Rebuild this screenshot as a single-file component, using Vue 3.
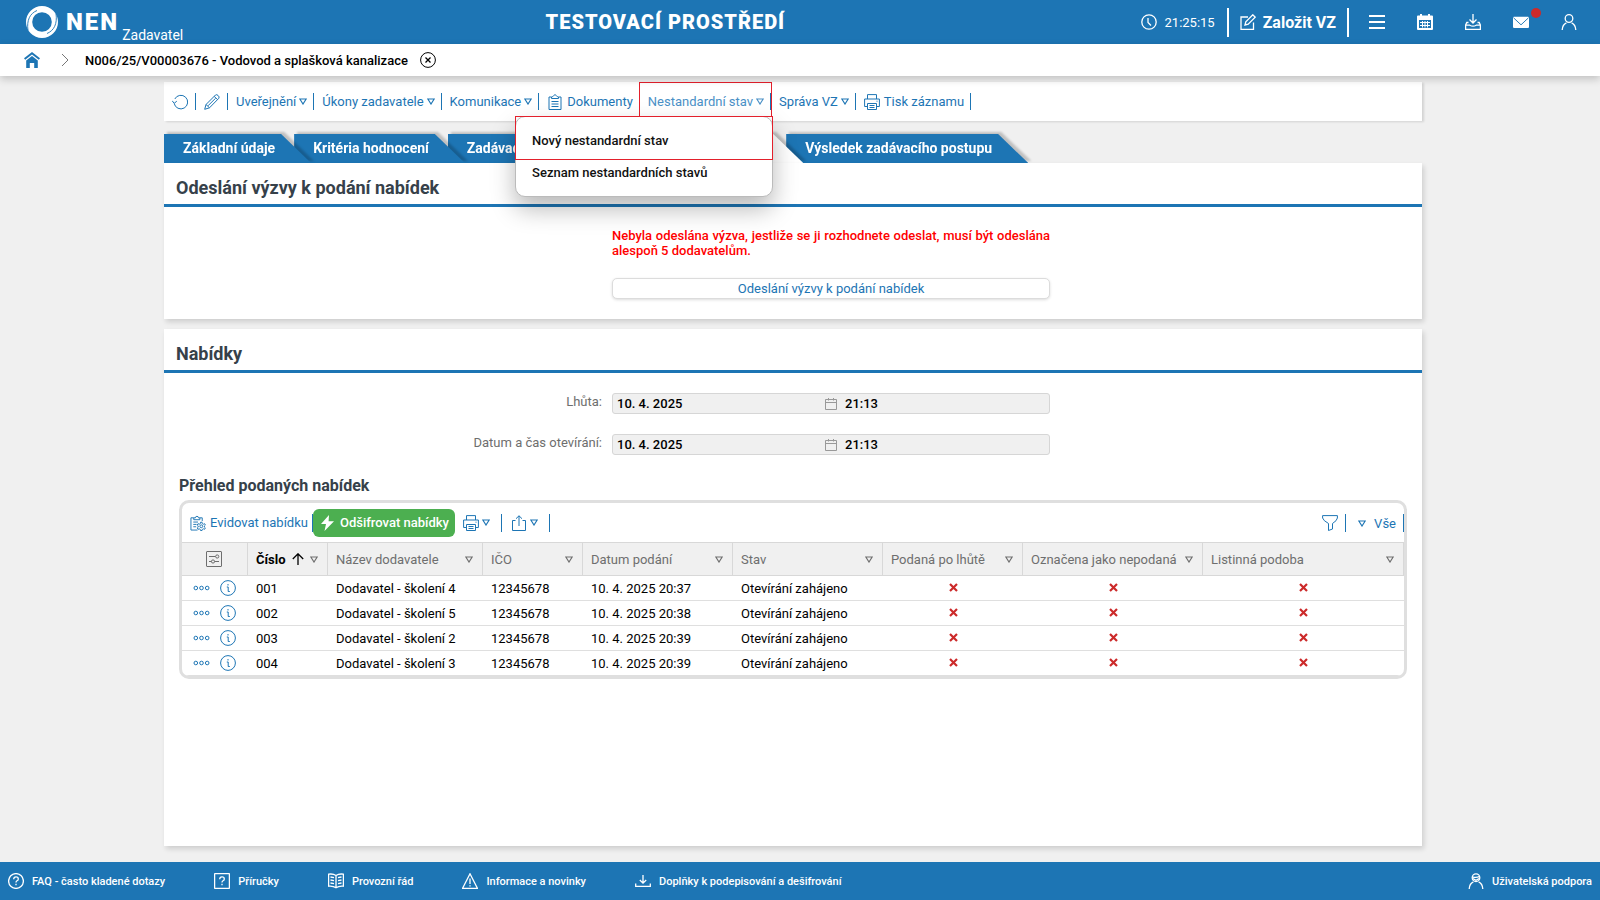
<script setup>
import { ref } from 'vue'

const headerActions = [
  { icon: 'menu', label: 'Menu' },
  { icon: 'calendar-solid', label: 'Kalendář' },
  { icon: 'inbox', label: 'Stažené soubory' },
  { icon: 'mail', label: 'Zprávy', dot: true },
  { icon: 'user', label: 'Profil' },
]

const tools = [
  { icon: 'refresh', label: 'Obnovit' },
  { icon: 'pencil', label: 'Upravit' },
  { text: 'Uveřejnění', menu: true },
  { text: 'Úkony zadavatele', menu: true },
  { text: 'Komunikace', menu: true },
  { icon: 'clipboard', text: 'Dokumenty' },
  { text: 'Nestandardní stav', menu: true, open: true },
  { text: 'Správa VZ', menu: true },
  { icon: 'printer', text: 'Tisk záznamu' },
]

const menuItems = [
  { text: 'Nový nestandardní stav', marked: true },
  { text: 'Seznam nestandardních stavů' },
]

const tabs = [
  { text: 'Základní údaje' },
  { text: 'Kritéria hodnocení' },
  { text: 'Zadávací podmínky' },
  { label: 'Nabídky', active: true },
  { text: 'Výsledek zadávacího postupu' },
]

const deadlines = ref([
  { id: 'lhuta', label: 'Lhůta:', date: '10. 4. 2025', time: '21:13' },
  { id: 'otevirani', label: 'Datum a čas otevírání:', date: '10. 4. 2025', time: '21:13' },
])

const columns = [
  { text: 'Číslo', sorted: true, cls: 'c-num' },
  { text: 'Název dodavatele', cls: 'c-name' },
  { text: 'IČO', cls: 'c-ico' },
  { text: 'Datum podání', cls: 'c-wide' },
  { text: 'Stav', cls: 'c-wide' },
  { text: 'Podaná po lhůtě', cls: 'c-late' },
  { text: 'Označena jako nepodaná', cls: 'c-mark' },
  { text: 'Listinná podoba', cls: 'c-rest' },
]

const rows = [
  ['001', 'Dodavatel - školení 4', '12345678', '10. 4. 2025 20:37', 'Otevírání zahájeno'],
  ['002', 'Dodavatel - školení 5', '12345678', '10. 4. 2025 20:38', 'Otevírání zahájeno'],
  ['003', 'Dodavatel - školení 2', '12345678', '10. 4. 2025 20:39', 'Otevírání zahájeno'],
  ['004', 'Dodavatel - školení 3', '12345678', '10. 4. 2025 20:39', 'Otevírání zahájeno'],
]

const footerLinks = [
  { icon: 'help-circle', text: 'FAQ - často kladené dotazy' },
  { icon: 'help-square', text: 'Příručky' },
  { icon: 'book', text: 'Provozní řád' },
  { icon: 'warning', text: 'Informace a novinky' },
  { icon: 'download', text: 'Doplňky k podepisování a dešifrování' },
]
</script>

<template>
  <div class="page">
    <svg class="sprite" aria-hidden="true">
      <symbol id="i-clock" viewBox="0 0 16 16"><circle cx="8" cy="8" r="7.2" /><path d="M7 4v4.500l3 3" /></symbol>
      <symbol id="i-edit" viewBox="0 0 16 16"><path d="M8 3H1v12.400h12.500V8.500M5 11l.8-3.200L12.800.8l2.400 2.400-7 7z" /></symbol>
      <symbol id="i-menu" viewBox="0 0 16 16"><path stroke-width="2" d="M0 2h16M0 8h16M0 14h16" /></symbol>
      <symbol id="i-calendar-solid" viewBox="0 0 16 16"><path fill="currentColor" stroke="none" fill-rule="evenodd" d="M1 1.500h2V0h2v1.500h6V0h2v1.500h2a1 1 0 0 1 1 1V15a1 1 0 0 1-1 1H1a1 1 0 0 1-1-1V2.500a1 1 0 0 1 1-1zM2 6v8h12V6z" /><path stroke-width="1" d="M3 8.500h10M3 11.500h10M5.500 7v6.500M8 7v6.500M10.500 7v6.500" /></symbol>
      <symbol id="i-inbox" viewBox="0 0 16 16"><path d="M8 0v8.500M4.500 5.500 8 9l3.500-3.500M3.500 8.500H1.800L.6 11v4.400h14.800V11l-1.200-2.500h-1.700M.6 11.200h4.200q3.200 2 6.400 0h4.200" /></symbol>
      <symbol id="i-mail" viewBox="0 0 17 16"><rect x="0" y="2.500" width="17" height="12" rx="1.200" fill="currentColor" stroke="none" /><path stroke="#1d75b4" stroke-width="1" d="M.5 3.500 8.500 11l8-7.500" /></symbol>
      <symbol id="i-user" viewBox="0 0 16 16"><circle cx="8" cy="4.500" r="3.800" /><path d="M1.200 16c.2-4 1.800-6.200 4.200-7.200M14.800 16c-.2-4-1.800-6.200-4.200-7.200" /></symbol>
      <symbol id="i-home" viewBox="0 0 16 16"><path fill="currentColor" stroke="none" d="M8 0 0 6.300l1.200 1.500L8 2.400l6.800 5.400L16 6.300zM8 4 2.200 8.600V16h3.600v-5h4.400v5h3.600V8.600z" /></symbol>
      <symbol id="i-close" viewBox="0 0 16 16"><circle cx="8" cy="8" r="7.400" /><path stroke-width="1.300" d="m5.500 5.500 5 5m0-5-5 5" /></symbol>
      <symbol id="i-refresh" viewBox="0 0 16 16"><path d="M2.200 9.500A6.800 6.800 0 1 0 2.800 5M.2 6.800l2 2.500L4.800 7.200" /></symbol>
      <symbol id="i-pencil" viewBox="0 0 16 16"><path d="M.7 15.300 2 10.500 11.500 1q1.200-.9 2.600.5 1.700 1.500.7 2.800L5.500 13.800zM2 10.500l3.500 3.300M10.200 2.400l3.500 3.300M4 11.800l7.500-7.500" /></symbol>
      <symbol id="i-clipboard" viewBox="0 0 16 16"><path d="M4.500 3h-2.500v12.500h12V3h-2.500M4.500 4.500V3Q6 2.800 6.400 1.800q1.600-2.400 3.200 0Q10 2.800 11.500 3v1.500zM4.500 7.500h7M4.500 10h7M4.500 12.500h7" /></symbol>
      <symbol id="i-printer" viewBox="0 0 16 16"><path d="M3.500 5V.6h9V5M3.500 12.500H.6V5h14.800v7.500h-2.900M3.500 9.500h9v6h-9zM5.500 11.500h5M5.500 13.500h5M12.500 7.200h1" /></symbol>
      <symbol id="i-register" viewBox="0 0 17 16"><path d="M4 2.500H1v13h7M4 4.500v-2h1.800a1.600 1.600 0 0 1 3.200 0h1.500v2zM10.500 2.500H13v3.500M3.500 7h5M3.500 9.500h3.500M3.500 12h3" /><circle cx="12" cy="11.500" r="1.500" /><path d="m11.200 7.200-.2 1.400-1.200.7-1.300-.6-.8 1.500 1 .9v1.300l-1 .8.800 1.500 1.300-.5 1.200.7.200 1.100h1.600l.2-1.100 1.200-.7 1.300.5.800-1.500-1-.8v-1.300l1-.9-.8-1.500-1.300.6-1.200-.7-.2-1.400z" /></symbol>
      <symbol id="i-bolt" viewBox="0 0 13 16"><path fill="currentColor" stroke="none" d="M8 0 0 9h5L3.500 16 13 6.200H7.600z" /></symbol>
      <symbol id="i-share" viewBox="0 0 16 16"><path d="M4.500 5.500h-3v10h13v-10h-3M8 11V.8M5 3.700 8 .8l3 2.900" /></symbol>
      <symbol id="i-filter" viewBox="0 0 16 16"><path d="M.6.600h14.800v2.400q-.3 2.600-4.900 5.500V14l-4 1.500v-7Q1.200 5.600.6 3z" /></symbol>
      <symbol id="i-date" viewBox="0 0 12 12"><path d="M.5 1.500h11v10H.5zM.5 4.500h11M3.500 0v2.500M8.500 0v2.500" /></symbol>
      <symbol id="i-settings" viewBox="0 0 16 16"><rect x=".5" y=".5" width="15" height="15" rx=".5" /><path d="M3 5.500h6.500M3 10.500h2.500M8.500 10.500H13" /><circle cx="11.200" cy="5.500" r="1.600" /><circle cx="7" cy="10.500" r="1.600" /></symbol>
      <symbol id="i-tri" viewBox="0 0 8 7"><path stroke-width="1.200" d="M.8 1h6.400L4 6z" /></symbol>
      <symbol id="i-up" viewBox="0 0 12 12"><path stroke-width="1.300" d="M6 12V.8M.8 6 6 .8 11.200 6" /></symbol>
      <symbol id="i-dots" viewBox="0 0 17 6"><circle cx="2.800" cy="3" r="1.800" /><circle cx="8.500" cy="3" r="1.800" /><circle cx="14.200" cy="3" r="1.800" /></symbol>
      <symbol id="i-info" viewBox="0 0 16 16"><circle cx="8" cy="8" r="7.400" /><path d="M6.800 7h1.400v4.500h1.600M8 4v1.500" /></symbol>
      <symbol id="i-cross" viewBox="0 0 9 9"><path stroke-width="2.200" d="m1 1 7 7m0-7-7 7" /></symbol>
      <symbol id="i-help-circle" viewBox="0 0 16 16"><circle cx="8" cy="8" r="7.400" /><path d="M5.700 6.200q0-2.300 2.300-2.300t2.300 2q0 1.200-1.300 1.900-1 .6-1 1.700M8 10.800v1.400" /></symbol>
      <symbol id="i-help-square" viewBox="0 0 16 16"><rect x=".6" y=".6" width="14.800" height="14.800" rx=".6" /><path d="M5.700 6.200q0-2.300 2.300-2.300t2.300 2q0 1.200-1.300 1.900-1 .6-1 1.700M8 10.800v1.400" /></symbol>
      <symbol id="i-book" viewBox="0 0 16 16"><path d="M8 2.500Q5 .5.600 1.200v12Q5 12.700 8 14.800q3-2.100 7.400-1.600v-12Q11 .5 8 2.500zv12M2.500 4l3.500.6M2.500 7l3.500.6M2.500 10l3.500.6M13.500 4l-3.500.6M13.500 7l-3.500.6M13.500 10l-3.500.6" /></symbol>
      <symbol id="i-warning" viewBox="0 0 16 16"><path d="M8 .8.600 15.300h14.800zM8 5.500v5.500M8 12.200v1.300" /></symbol>
      <symbol id="i-download" viewBox="0 0 16 16"><path d="M8 2v8M4.800 7 8 10.200 11.200 7M.7 10.500v2.900h14.600v-2.900" /></symbol>
      <symbol id="i-support" viewBox="0 0 16 16"><circle cx="8" cy="4.700" r="3.800" /><path d="M4.300 3.800q4 1.300 7.400-.4M5 5.600l3 1.600 3-1.600M1.200 16c.2-4 1.800-6.200 4.200-7.200M14.800 16c-.2-4-1.800-6.200-4.200-7.200" /></symbol>
    </svg>

    <header class="top">
      <a class="brand" href="#">
        <svg class="logo" viewBox="0 0 32 32" aria-hidden="true">
          <path fill="#fff" fill-rule="evenodd" d="M16 0a16 16 0 1 0 0 32 16 16 0 0 0 0-32zM16 6.200a9.800 9.800 0 1 1 0 19.600 9.800 9.800 0 0 1 0-19.600z" />
          <path fill="none" stroke="#1d75b4" stroke-width=".9" d="M2 24.500C.5 14 4 7.500 11 4.500M30 7.500C31.500 18 28 24.500 21 27.500" />
        </svg>
        <span class="nen">NEN</span>
        <span class="role">Zadavatel</span>
      </a>
      <div class="env">TESTOVACÍ PROSTŘEDÍ</div>
      <div class="top-right">
        <div class="clock"><svg class="icon"><use href="#i-clock" /></svg><time>21:25:15</time></div>
        <a class="create" href="#"><svg class="icon"><use href="#i-edit" /></svg>Založit VZ</a>
        <nav class="actions">
          <button v-for="a in headerActions" :key="a.icon" :aria-label="a.label" class="icon-btn">
            <svg class="icon"><use :href="'#i-' + a.icon" /></svg>
            <span v-if="a.dot" class="dot"></span>
          </button>
        </nav>
      </div>
    </header>

    <nav class="crumbs">
      <a href="#" class="home" aria-label="Domů"><svg class="icon"><use href="#i-home" /></svg></a>
      <svg class="chevron" viewBox="0 0 8 14"><path d="m1 1 6 6-6 6" /></svg>
      <a href="#" class="crumb">N006/25/V00003676 - Vodovod a splašková kanalizace</a>
      <button class="icon-btn" aria-label="Zavřít"><svg class="icon"><use href="#i-close" /></svg></button>
    </nav>

    <main class="main">
      <div class="toolbar">
        <div v-for="(t, i) in tools" :key="i" class="tool" :class="{ open: t.open, bare: !t.text }">
          <button class="tool-btn" :aria-label="t.text || t.label">
            <svg v-if="t.icon" class="icon"><use :href="'#i-' + t.icon" /></svg>
            <span v-if="t.text">{{ t.text }}</span>
            <svg v-if="t.menu" class="tri"><use href="#i-tri" /></svg>
          </button>
          <div v-if="t.open" class="menu">
            <button v-for="m in menuItems" :key="m.text" class="menu-item" :class="{ marked: m.marked }">{{ m.text }}</button>
          </div>
        </div>
      </div>

      <div class="tabs">
        <button v-for="(t, i) in tabs" :key="i" class="tab" :class="{ active: t.active }" :aria-label="t.label">
          <span v-if="t.text">{{ t.text }}</span>
        </button>
      </div>

      <section class="panel invite">
        <h2>Odeslání výzvy k podání nabídek</h2>
        <div class="form-row">
          <div class="field">
            <p class="warn">Nebyla odeslána výzva, jestliže se ji rozhodnete odeslat, musí být odeslána alespoň 5 dodavatelům.</p>
            <button class="send">Odeslání výzvy k podání nabídek</button>
          </div>
        </div>
      </section>

      <section class="panel offers">
        <h2>Nabídky</h2>
        <div class="deadlines">
          <div v-for="d in deadlines" :key="d.id" class="form-row">
            <label :for="d.id">{{ d.label }}</label>
            <div class="datetime">
              <input :id="d.id" v-model="d.date" class="date" readonly />
              <svg class="date-icon"><use href="#i-date" /></svg>
              <input v-model="d.time" class="time" :aria-label="d.label + ' čas'" readonly />
            </div>
          </div>
        </div>

        <h3>Přehled podaných nabídek</h3>
        <div class="grid">
          <div class="grid-bar">
            <button class="bar-btn first"><svg class="icon"><use href="#i-register" /></svg>Evidovat nabídku</button>
            <button class="decrypt"><svg class="bolt"><use href="#i-bolt" /></svg>Odšifrovat nabídky</button>
            <button class="bar-btn" aria-label="Tisk"><svg class="icon"><use href="#i-printer" /></svg><svg class="tri"><use href="#i-tri" /></svg></button>
            <button class="bar-btn" aria-label="Export"><svg class="icon"><use href="#i-share" /></svg><svg class="tri"><use href="#i-tri" /></svg></button>
            <button class="bar-btn filter" aria-label="Filtr"><svg class="icon"><use href="#i-filter" /></svg></button>
            <button class="bar-btn all"><svg class="tri"><use href="#i-tri" /></svg>Vše</button>
          </div>
          <table>
            <thead>
              <tr>
                <th class="c-act"><button class="icon-btn" aria-label="Nastavení sloupců"><svg class="icon"><use href="#i-settings" /></svg></button></th>
                <th v-for="c in columns" :key="c.text" :class="[c.cls, { sorted: c.sorted }]">
                  <div class="th">
                    <span>{{ c.text }}</span>
                    <svg v-if="c.sorted" class="up"><use href="#i-up" /></svg>
                    <svg class="tri"><use href="#i-tri" /></svg>
                  </div>
                </th>
              </tr>
            </thead>
            <tbody>
              <tr v-for="r in rows" :key="r[0]">
                <td class="row-act">
                  <div>
                    <button class="icon-btn" aria-label="Další akce"><svg class="dots"><use href="#i-dots" /></svg></button>
                    <button class="icon-btn" aria-label="Detail"><svg class="icon"><use href="#i-info" /></svg></button>
                  </div>
                </td>
                <td v-for="(v, i) in r" :key="i">{{ v }}</td>
                <td v-for="n in 3" :key="'x' + n" class="no"><svg class="cross" role="img" aria-label="Ne"><use href="#i-cross" /></svg></td>
              </tr>
            </tbody>
          </table>
        </div>
      </section>
    </main>

    <footer class="foot">
      <a v-for="f in footerLinks" :key="f.icon" href="#"><svg class="icon"><use :href="'#i-' + f.icon" /></svg>{{ f.text }}</a>
      <a href="#" class="support"><svg class="icon"><use href="#i-support" /></svg>Uživatelská podpora</a>
    </footer>
  </div>
</template>

<style>
body {
  background: #f0f0f0;
}
</style>

<style scoped>
.page {
  --blue: #1d75b4;
  box-sizing: border-box;
  min-height: 100vh;
  display: flex;
  flex-direction: column;
  font-family: Roboto, "Liberation Sans", sans-serif;
  font-size: 13px;
  line-height: 15px;
  color: #000;
  background: #f0f0f0;
}
.page *,
.page *::before {
  box-sizing: border-box;
}
.sprite {
  position: absolute;
  width: 0;
  height: 0;
}
svg {
  flex: none;
  fill: none;
  stroke: currentColor;
  stroke-width: 1;
}
.icon {
  width: 16px;
  height: 16px;
}
.top .icon,
.foot .icon {
  stroke-width: 1.3;
}
.tri {
  width: 8px;
  height: 7px;
}
button {
  font: inherit;
  color: inherit;
  background: none;
  border: 0;
  padding: 0;
  cursor: pointer;
}
a {
  color: inherit;
  text-decoration: none;
}
.icon-btn {
  display: flex;
  align-items: center;
  justify-content: center;
}

.top {
  display: grid;
  grid-template-columns: auto 1fr auto;
  align-items: center;
  height: 44px;
  padding: 0 7px 0 26px;
  background: var(--blue);
  color: #fff;
}
.brand {
  display: flex;
  align-items: center;
}
.logo {
  width: 32px;
  height: 32px;
  stroke: none;
}
.nen {
  margin-left: 8px;
  font-size: 24px;
  line-height: 44px;
  font-weight: 900;
  letter-spacing: 2px;
}
.role {
  align-self: flex-end;
  margin-left: 3px;
  font-size: 14px;
  line-height: 18px;
}
.env {
  padding-left: 7px;
  text-align: center;
  font-size: 20px;
  line-height: 24px;
  font-weight: 900;
  letter-spacing: 1px;
}
.top-right {
  display: flex;
  align-items: center;
}
.clock {
  display: flex;
  align-items: center;
  gap: 8px;
  padding-right: 12px;
}
.create {
  display: flex;
  align-items: center;
  gap: 7px;
  height: 29px;
  padding: 0 11px;
  border: solid #fff;
  border-width: 0 2px;
  font-size: 16px;
  font-weight: 700;
}
.actions {
  display: flex;
  padding-left: 4px;
}
.actions .icon-btn {
  position: relative;
  width: 48px;
  height: 44px;
}
.dot {
  position: absolute;
  top: 8px;
  right: 4px;
  width: 10px;
  height: 10px;
  border-radius: 50%;
  background: #cc2a2a;
}

.crumbs {
  position: relative;
  z-index: 8;
  display: flex;
  align-items: center;
  height: 32px;
  padding-left: 24px;
  background: #fff;
  box-shadow: 0 3px 8px rgba(0, 0, 0, 0.2);
}
.home {
  display: flex;
  color: var(--blue);
}
.chevron {
  width: 8px;
  height: 14px;
  margin: 0 16px 0 21px;
  color: #777;
}
.crumb {
  margin-right: 12px;
  font-weight: 500;
}

.main {
  flex: 1;
  display: flex;
  flex-direction: column;
  padding: 6px 178px 16px 164px;
}
.toolbar {
  position: relative;
  z-index: 7;
  display: flex;
  height: 39px;
  background: #fff;
  box-shadow: 2px 1px 2px rgba(0, 0, 0, 0.12);
  color: var(--blue);
}
.tool {
  position: relative;
  display: flex;
  align-items: center;
}
.tool::after {
  content: "";
  width: 1px;
  height: 17px;
  background: var(--blue);
}
.tool-btn {
  display: flex;
  align-items: center;
  gap: 3px;
  height: 39px;
  padding: 0 6px 0 8px;
}
.bare .tool-btn {
  padding-right: 7px;
}
.tool-btn .icon + span {
  padding-left: 1px;
}
.open .tool-btn {
  color: #4a90c6;
}
.tool.open::before {
  content: "";
  position: absolute;
  inset: 0 -1px 4px -1px;
  border: 1px solid #e3202c;
}
.menu {
  position: absolute;
  top: 34px;
  right: -2px;
  width: 258px;
  padding-bottom: 10px;
  background: #fff;
  border: 1px solid #bbb;
  border-radius: 10px;
  box-shadow: 0 12px 24px rgba(0, 0, 0, 0.28);
  color: #111;
}
.menu-item {
  display: block;
  width: 100%;
  height: 27px;
  padding: 0 16px;
  text-align: left;
  font-weight: 500;
}
.menu-item.marked {
  height: 42px;
  padding-top: 4px;
  outline: 1px solid #e3202c;
}

.tabs {
  display: flex;
  height: 29px;
  margin-top: 13px;
}
.tab {
  position: relative;
  z-index: 1;
  flex: none;
  padding: 0 19px;
  color: #fff;
  font-size: 14px;
  font-weight: 700;
  filter: drop-shadow(3px -2px 1px rgba(0, 0, 0, 0.2));
}
.tab::before {
  content: "";
  position: absolute;
  inset: 0 -17px 0 0;
  background: var(--blue);
  clip-path: polygon(0 0, calc(100% - 30px) 0, 100% 100%, 0 100%);
}
.tab span {
  position: relative;
}
.tab:nth-child(1) {
  z-index: 5;
}
.tab:nth-child(2) {
  z-index: 4;
}
.tab:nth-child(3) {
  z-index: 3;
}
.tab.active {
  z-index: 2;
  width: 178px;
}
.tab.active::before {
  background: #fff;
}

.panel {
  position: relative;
  z-index: 6;
  background: #fff;
  box-shadow: 2px 3px 5px rgba(0, 0, 0, 0.14);
}
h2 {
  margin: 0;
  height: 44px;
  padding: 0 12px;
  border-bottom: 3px solid var(--blue);
  font-size: 18px;
  line-height: 50px;
  font-weight: 700;
  color: #36414a;
}
.invite {
  height: 156px;
}
.form-row {
  display: grid;
  grid-template-columns: 448fr 438fr 372fr;
}
.form-row .field {
  grid-column: 2;
}
.warn {
  margin: 21px 0 20px;
  color: #f00;
  font-weight: 500;
  text-align: justify;
}
.send {
  display: block;
  width: 100%;
  height: 21px;
  border: 1px solid #dcdcdc;
  border-radius: 5px;
  box-shadow: 0 1px 3px rgba(0, 0, 0, 0.14);
  color: var(--blue);
  background: #fff;
}

.offers {
  flex: 1;
  margin-top: 10px;
}
.deadlines {
  display: grid;
  gap: 20px;
  padding-top: 20px;
}
.deadlines label {
  padding: 1px 10px 0 0;
  text-align: right;
  color: #6e6e6e;
}
.datetime {
  display: grid;
  grid-template-columns: 1fr 12px 1fr;
  align-items: center;
  height: 21px;
  border: 1px solid #d6d6d6;
  border-radius: 3px;
  background: #f0f0f0;
  color: #999;
}
.datetime input {
  min-width: 0;
  width: 100%;
  padding: 0 4px;
  border: 0;
  background: none;
  font: inherit;
  font-weight: 500;
  color: #000;
}
.datetime .time {
  padding-left: 8px;
}
.date-icon {
  width: 12px;
  height: 12px;
}
h3 {
  margin: 21px 15px 4px;
  font-size: 16px;
  line-height: 20px;
  font-weight: 700;
  color: #36414a;
}
.grid {
  margin: 0 15px;
  border: 3px solid #dfdfdf;
  border-radius: 10px;
  overflow: hidden;
}
.grid-bar {
  display: flex;
  align-items: center;
  height: 39px;
  padding-left: 1px;
  color: var(--blue);
}
.bar-btn {
  display: flex;
  align-items: center;
  gap: 3px;
  padding: 0 11px 0 9px;
  height: 18px;
  border-right: 1px solid var(--blue);
}
.bar-btn.first {
  gap: 4px;
  padding: 0 4px 0 7px;
}
.decrypt + .bar-btn {
  padding-left: 8px;
}
.decrypt {
  display: flex;
  align-items: center;
  gap: 6px;
  height: 28px;
  padding: 0 6px 0 8px;
  border-radius: 6px;
  background: #4caf50;
  color: #fff;
  font-weight: 500;
}
.bolt {
  width: 13px;
  height: 16px;
}
.bar-btn.filter {
  margin-left: auto;
  padding-right: 7px;
}
.bar-btn.all {
  gap: 8px;
  padding: 2px 7px 0 12px;
}
table {
  width: 100%;
  table-layout: fixed;
  border-collapse: separate;
  border-spacing: 0;
}
th {
  height: 34px;
  padding: 0 9px 0 8px;
  background: #f0f0f0;
  border: solid #d8d8d8;
  border-width: 1px 1px 1px 0;
  font-weight: 400;
  color: #6e6e6e;
  text-align: left;
}
th.sorted {
  color: #000;
  font-weight: 700;
}
.sorted .tri {
  color: #6e6e6e;
}
.th {
  display: flex;
  align-items: center;
  justify-content: space-between;
  white-space: nowrap;
}
.up {
  width: 12px;
  height: 12px;
}
.c-act {
  width: 66px;
}
.c-act .icon-btn {
  width: 100%;
}
.c-num {
  width: 80px;
}
.c-name {
  width: 155px;
}
.c-ico {
  width: 100px;
}
.c-wide {
  width: 150px;
}
.c-late {
  width: 140px;
}
.c-mark {
  width: 180px;
}
td {
  height: 25px;
  padding: 1px 8px 0;
  border-bottom: 1px solid #dfdfdf;
  white-space: nowrap;
}
td.row-act {
  padding: 0 12px 0 11px;
  color: var(--blue);
}
.row-act div {
  display: flex;
  justify-content: space-between;
}
.dots {
  width: 17px;
  height: 6px;
}
td.no {
  padding: 0 8px 2px;
  color: #cc2a2a;
}
.cross {
  display: block;
  width: 9px;
  height: 9px;
  margin: 0 auto;
}

.foot {
  display: flex;
  align-items: center;
  gap: 49px;
  height: 38px;
  padding: 0 8px;
  background: var(--blue);
  color: #fff;
  font-size: 11px;
  font-weight: 500;
}
.foot a {
  display: flex;
  align-items: center;
  gap: 8px;
}
.support {
  margin-left: auto;
}
</style>
